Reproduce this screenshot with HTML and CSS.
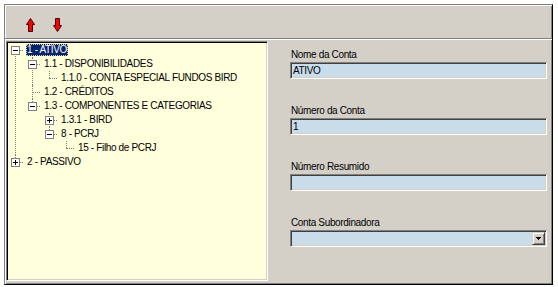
FILE: index.html
```html
<!doctype html>
<html lang="pt-br">
<head>
  <meta charset="UTF-8">
  <title>Plano de Contas</title>
  <link rel="stylesheet" href="styles.css">
</head>
<body>
<div class="window">
  <div class="toolbar">
    <button class="tool-btn" title="Subir">
      <svg width="9" height="14" viewBox="0 0 9 14">
        <polygon class="arrow" points="4.5,0.5 8.5,6.5 6.5,6.5 6.5,13.5 2.5,13.5 2.5,6.5 0.5,6.5"/>
      </svg>
    </button>
    <button class="tool-btn" title="Descer">
      <svg width="9" height="14" viewBox="0 0 9 14">
        <polygon class="arrow" points="2.5,0.5 6.5,0.5 6.5,7.5 8.5,7.5 4.5,13.5 0.5,7.5 2.5,7.5"/>
      </svg>
    </button>
  </div>
  <div class="content">
    <div class="tree-panel">
      <ul class="tree">
        <li>
          <div class="node"><span class="exp"></span><span class="label selected">1 - ATIVO</span></div>
          <ul>
            <li>
              <div class="node"><span class="exp"></span><span class="label">1.1 - DISPONIBILIDADES</span></div>
              <ul>
                <li><div class="node"><span class="label">1.1.0 - CONTA ESPECIAL FUNDOS BIRD</span></div></li>
              </ul>
            </li>
            <li><div class="node"><span class="label">1.2 - CRÉDITOS</span></div></li>
            <li>
              <div class="node"><span class="exp"></span><span class="label">1.3 - COMPONENTES E CATEGORIAS</span></div>
              <ul>
                <li><div class="node"><span class="exp plus"></span><span class="label">1.3.1 - BIRD</span></div></li>
                <li>
                  <div class="node"><span class="exp"></span><span class="label">8 - PCRJ</span></div>
                  <ul>
                    <li><div class="node"><span class="label">15 - Filho de PCRJ</span></div></li>
                  </ul>
                </li>
              </ul>
            </li>
          </ul>
        </li>
        <li><div class="node"><span class="exp plus"></span><span class="label">2 - PASSIVO</span></div></li>
      </ul>
    </div>
    <div class="form">
      <div class="field">
        <div class="field-label">Nome da Conta</div>
        <div class="input">ATIVO</div>
      </div>
      <div class="field">
        <div class="field-label">Número da Conta</div>
        <div class="input">1</div>
      </div>
      <div class="field">
        <div class="field-label">Número Resumido</div>
        <div class="input"></div>
      </div>
      <div class="field">
        <div class="field-label">Conta Subordinadora</div>
        <div class="input combo">
          <span class="combo-btn">
            <svg width="5" height="3" viewBox="0 0 5 3"><path d="M0 0h5v1h-1v1h-1v1h-1v-1h-1v-1h-1z"/></svg>
          </span>
        </div>
      </div>
    </div>
  </div>
</div>
</body>
</html>
```

FILE: styles.css
```css
body {
  margin: 0;
  background: #fff;
  font-family: "Liberation Sans", Arial, sans-serif;
  font-size: 10px;
  letter-spacing: -0.35px;
  color: #000;
}

.window {
  box-sizing: border-box;
  width: 549px;
  height: 281px;
  margin: 4px 0 0 4px;
  background: #d4d0c8;
  border-top: 1px solid #808080;
  border-left: 1px solid #808080;
  border-right: 1px solid #000;
  border-bottom: 1px solid #000;
  box-shadow: inset 1px 1px #fff, inset -1px -1px #808080;
}

/* barra de botões */
.toolbar {
  box-sizing: border-box;
  height: 34px;
  display: flex;
  gap: 18px;
  padding: 13px 0 0 21px;
  border-bottom: 1px solid #808080;
  box-shadow: 0 1px #fff;
  margin-bottom: 1px;
}

.tool-btn {
  display: block;
  width: 9px;
  height: 14px;
  padding: 0;
  border: 0;
  background: none;
}

.tool-btn svg {
  display: block;
}

.arrow {
  fill: #f00;
  stroke: #400000;
  stroke-width: 1;
}

.content {
  display: flex;
  height: 244px;
}

/* arvore */
.tree-panel {
  box-sizing: border-box;
  width: 262px;
  height: 240px;
  margin: 1px 0 3px 1px;
  padding: 1px;
  background: #ffffdc;
  border-top: 1px solid #808080;
  border-left: 1px solid #808080;
  border-right: 1px solid #fff;
  border-bottom: 1px solid #fff;
  box-shadow: inset 1px 1px #000, inset -1px -1px #d4d0c8;
}

.tree, .tree ul {
  list-style: none;
  margin: 0;
  padding: 0;
}

.tree ul {
  margin-left: 17px;
}

.tree li {
  position: relative;
}

.tree li:before {
  content: '';
  position: absolute;
  left: 7px;
  top: 0;
  bottom: 0;
  border-left: 1px dotted #808080;
}

.tree li:last-child:before {
  bottom: auto;
  height: 7px;
}

.tree > li:first-child:before {
  top: 7px;
}

.node {
  position: relative;
  height: 14px;
  padding-left: 18px;
  white-space: nowrap;
}

.node:before {
  content: '';
  position: absolute;
  left: 7px;
  top: 7px;
  width: 8px;
  border-top: 1px dotted #808080;
}

.exp {
  position: absolute;
  left: 3px;
  top: 3px;
  box-sizing: border-box;
  width: 9px;
  height: 9px;
  border: 1px solid #808080;
  background: #fff;
}

.exp:before {
  content: '';
  position: absolute;
  left: 1px;
  top: 3px;
  width: 5px;
  height: 1px;
  background: #000;
}

.exp.plus:after {
  content: '';
  position: absolute;
  left: 3px;
  top: 1px;
  width: 1px;
  height: 5px;
  background: #000;
}

.label {
  display: inline-block;
  vertical-align: top;
  height: 12px;
  line-height: 12px;
  margin-top: 1px;
  padding: 0 1px;
}

.label.selected {
  background: #0a246a;
  color: #fff;
  outline: 1px dotted #d8d8a0;
  outline-offset: -1px;
}

/* formulario */
.form {
  flex: 1;
  padding: 8px 5px 0 22px;
}

.field + .field {
  margin-top: 25px;
}

.field-label {
  line-height: 13px;
  padding-left: 1px;
  margin-bottom: 1px;
}

.input {
  box-sizing: border-box;
  height: 17px;
  padding: 0 2px;
  line-height: 15px;
  background: #c9dcea;
  border-top: 1px solid #808080;
  border-left: 1px solid #808080;
  border-right: 1px solid #fff;
  border-bottom: 1px solid #fff;
  box-shadow: inset 1px 1px #404040, inset -1px -1px #d4d0c8;
}

.combo {
  display: flex;
  justify-content: flex-end;
  align-items: center;
  padding: 1px;
}

.combo-btn {
  box-sizing: border-box;
  width: 13px;
  height: 13px;
  display: flex;
  align-items: center;
  justify-content: center;
  background: #d4d0c8;
  border-top: 1px solid #d4d0c8;
  border-left: 1px solid #d4d0c8;
  border-right: 1px solid #404040;
  border-bottom: 1px solid #404040;
  box-shadow: inset 1px 1px #fff, inset -1px -1px #808080;
}

.combo-btn svg {
  display: block;
}
```
